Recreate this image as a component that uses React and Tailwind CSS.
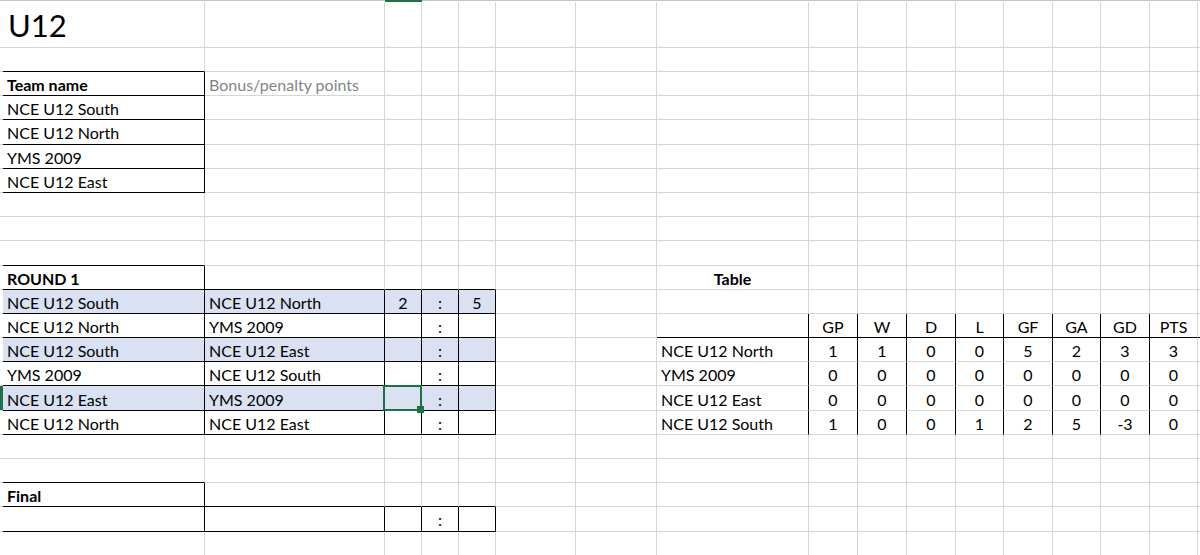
const matches = [
  ["NCE U12 South", "NCE U12 North", "2", "5"],
  ["NCE U12 North", "YMS 2009", "", ""],
  ["NCE U12 South", "NCE U12 East", "", ""],
  ["YMS 2009", "NCE U12 South", "", ""],
  ["NCE U12 East", "YMS 2009", "", ""],
  ["NCE U12 North", "NCE U12 East", "", ""],
];

const standings = [
  ["NCE U12 North", ["1", "1", "0", "0", "5", "2", "3", "3"]],
  ["YMS 2009", ["0", "0", "0", "0", "0", "0", "0", "0"]],
  ["NCE U12 East", ["0", "0", "0", "0", "0", "0", "0", "0"]],
  ["NCE U12 South", ["1", "0", "0", "1", "2", "5", "-3", "0"]],
];

const ROWS = 23;
const COLS = 18;

function buildCells() {
  const cells = {};
  const set = (r, c, v) => (cells[`${r},${c}`] = { ...(cells[`${r},${c}`] || {}), ...v });

  set(1, 1, { text: "U12", big: true });
  set(3, 1, { text: "Team name", bold: true });
  set(3, 2, { text: "Bonus/penalty points", grey: true });
  ["NCE U12 South", "NCE U12 North", "YMS 2009", "NCE U12 East"].forEach((t, i) =>
    set(4 + i, 1, { text: t })
  );

  set(11, 1, { text: "ROUND 1", bold: true });
  set(11, 8, { text: "Table", bold: true, center: true });
  matches.forEach((m, i) => {
    const r = 12 + i;
    set(r, 1, { text: m[0] });
    set(r, 2, { text: m[1] });
    set(r, 3, { text: m[2], center: true });
    set(r, 4, { text: ":", center: true });
    set(r, 5, { text: m[3], center: true });
  });

  ["GP", "W", "D", "L", "GF", "GA", "GD", "PTS"].forEach((h, i) =>
    set(13, 9 + i, { text: h, center: true })
  );
  standings.forEach(([name, vals], i) => {
    set(14 + i, 8, { text: name });
    vals.forEach((v, j) => set(14 + i, 9 + j, { text: v, center: true }));
  });

  set(20, 1, { text: "Final", bold: true });
  set(21, 4, { text: ":", center: true });
  return cells;
}

function rightBlack(r, c) {
  const inRange = (a, b) => r >= a && r <= b;
  if (c === 0 || c === 1) return inRange(3, 7) || inRange(11, 17) || inRange(20, 21);
  if (c >= 2 && c <= 5) return inRange(12, 17) || r === 21;
  if (c >= 8 && c <= 15) return inRange(13, 17);
  return false;
}

function bottomBlack(r, c) {
  if (c === 1 && ((r >= 2 && r <= 7) || r === 10 || r === 19)) return true;
  if (c >= 1 && c <= 5 && ((r >= 11 && r <= 17) || r === 20 || r === 21)) return true;
  if (r === 13 && c >= 8) return true;
  return false;
}

export default function App() {
  const cells = buildCells();
  const items = [];

  for (let r = 0; r < ROWS; r++) {
    for (let c = 0; c < COLS; c++) {
      const key = `${r},${c}`;
      if (r === 0) {
        items.push(
          <div
            key={key}
            className={c === 3 ? "bg-[#1e7145]" : "border-t border-t-[#c6c6c6] bg-white"}
          />
        );
        continue;
      }
      const cell = cells[key] || {};
      const blue = (r === 12 || r === 14 || r === 16) && c >= 1 && c <= 5;
      const rowHead = c === 0 && r === 16;
      const selected = r === 16 && c === 3;
      items.push(
        <div
          key={key}
          className={`relative flex border-r border-b whitespace-nowrap ${
            rightBlack(r, c) ? "border-r-black" : "border-r-[#d6d6d6]"
          } ${bottomBlack(r, c) ? "border-b-black" : "border-b-[#d6d6d6]"} ${
            blue ? "bg-[#d9e1f2]" : rowHead ? "bg-[#1e7145]" : "bg-white"
          } ${cell.center ? "justify-center" : "pl-[4px]"} ${
            cell.big ? "items-start pt-[8px]" : "items-center pt-[3px]"
          }`}
        >
          {cell.text && (
            <span
              className={`${
                cell.big ? "text-[31px] leading-none pl-[1px]" : "text-[16px] leading-[24px]"
              } ${cell.bold ? "font-bold" : ""} ${
                cell.grey ? "text-[#858585]" : "text-black"
              }`}
            >
              {cell.text}
            </span>
          )}
          {selected && (
            <div className="absolute z-10 -left-[2px] -top-[1px] -right-[1px] -bottom-[1px] border-2 border-[#1e7145]">
              <div className="absolute -right-[4px] -bottom-[4px] h-[7px] w-[7px] bg-[#1e7145]" />
            </div>
          )}
        </div>
      );
    }
  }

  return (
    <div
      className="h-[555px] w-[1200px] overflow-hidden bg-white"
      style={{ fontFamily: "Lato, 'Open Sans', sans-serif" }}
    >
      <div className="grid grid-cols-[3px_202px_180px_37px_37px_37px_80px_81px_152px_49px_49px_49px_48px_49px_48px_49px_48px_1fr] grid-rows-[2px_46px_24px_repeat(20,24.2px)]">
        {items}
      </div>
    </div>
  );
}
